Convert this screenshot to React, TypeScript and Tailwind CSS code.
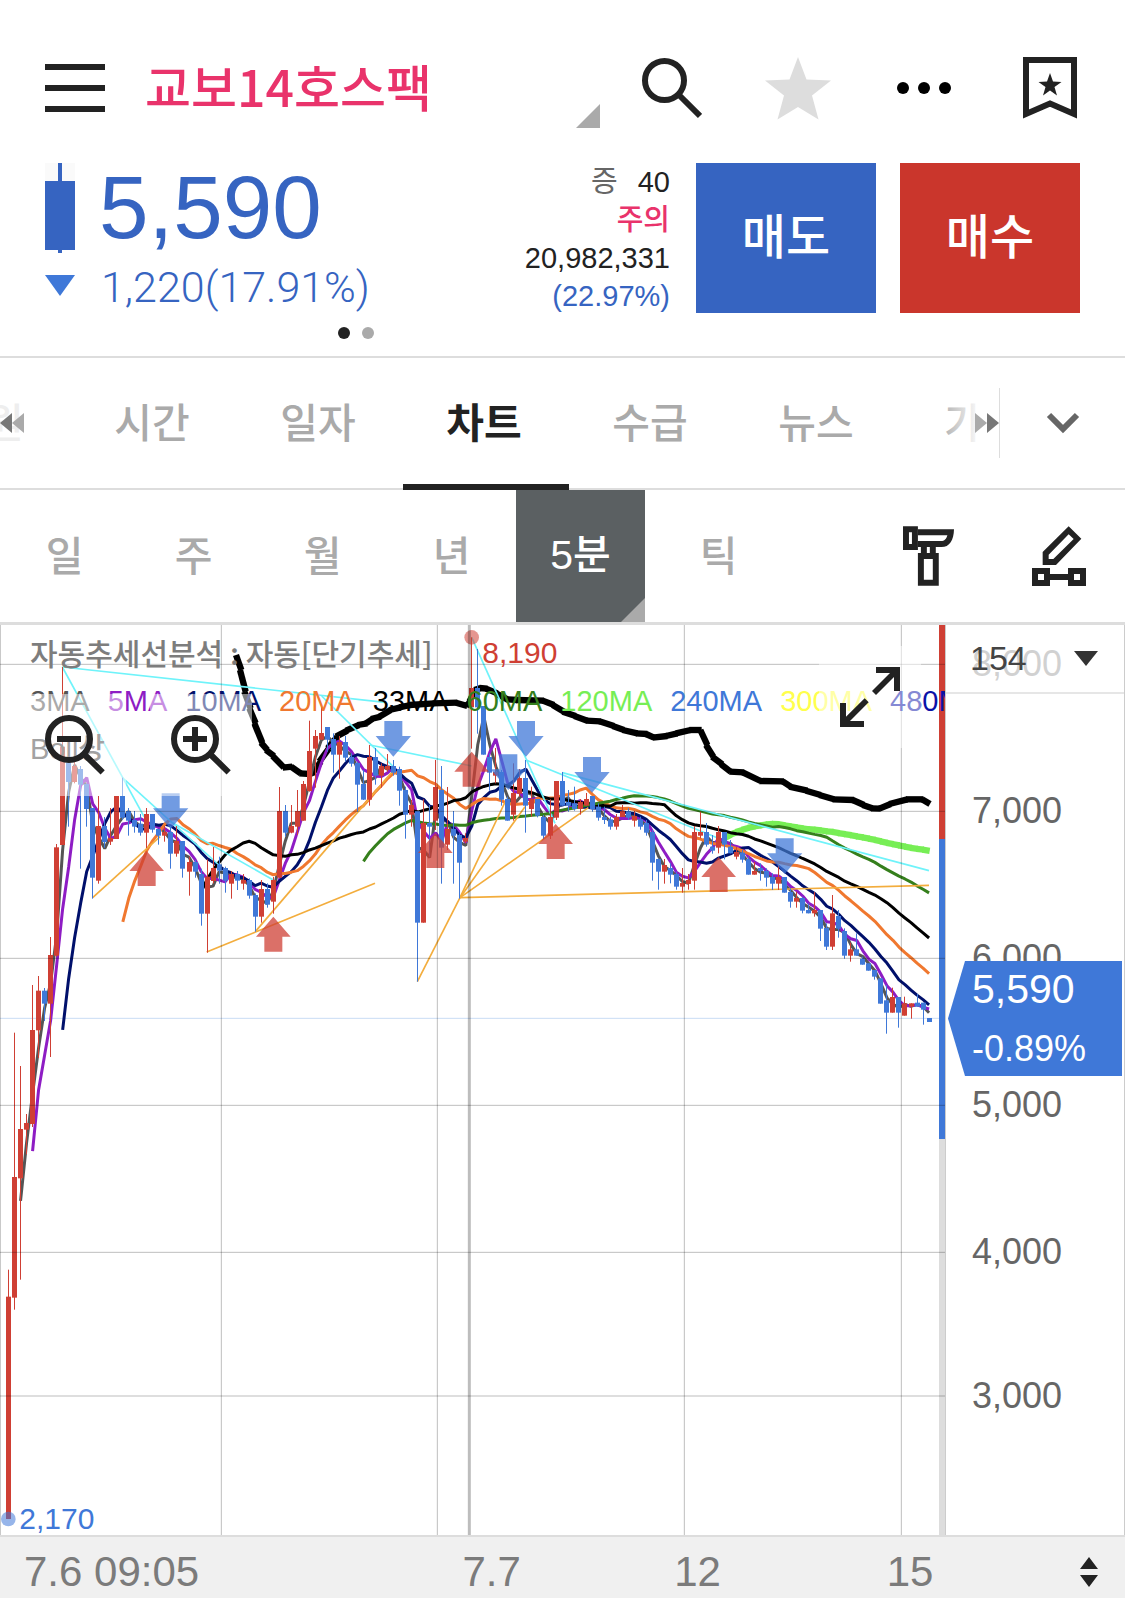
import React from "react";

type Candle = [color: "r" | "b", high: number, top: number, bottom: number, low: number];

/* Chart units: three per pixel, y grows downwards. */
const CHART = { width: 2835, top: 15, height: 2730 };
const STEP = 18.05;
const FIRST_X = 25.5;

const candles: Candle[] = [
  ["r", 1949, 2030, 2697, 2697], ["r", 1238, 1671, 2033, 2069], ["r", 1338, 1527, 1675, 1979], ["r", 1482, 1509, 1529, 1603],
  ["r", 1095, 1230, 1512, 1521], ["r", 1068, 1112, 1231, 1314], ["b", 1104, 1112, 1151, 1203], ["r", 951, 1005, 1151, 1311],
  ["r", 672, 682, 1007, 1010], ["r", 141, 380, 675, 675], ["b", 380, 428, 486, 620], ["r", 410, 438, 486, 490],
  ["b", 438, 447, 494, 746], ["b", 490, 492, 567, 620], ["b", 564, 564, 773, 836], ["r", 528, 618, 782, 791],
  ["b", 591, 618, 666, 683], ["r", 564, 654, 665, 675], ["r", 528, 528, 657, 657], ["b", 473, 528, 593, 600],
  ["b", 564, 573, 602, 647], ["b", 573, 600, 620, 638], ["b", 582, 611, 638, 647], ["r", 564, 582, 638, 684],
  ["b", 582, 582, 629, 638], ["b", 627, 627, 647, 674], ["r", 618, 636, 647, 665], ["b", 618, 636, 701, 746],
  ["r", 618, 663, 701, 710], ["b", 663, 663, 746, 773], ["r", 710, 726, 755, 827], ["b", 720, 726, 755, 773],
  ["b", 746, 762, 881, 917], ["r", 718, 770, 881, 998], ["r", 681, 744, 783, 790], ["b", 710, 733, 752, 791],
  ["b", 740, 744, 782, 818], ["r", 753, 762, 791, 836], ["b", 753, 762, 782, 810], ["r", 762, 780, 791, 809],
  ["b", 775, 780, 827, 836], ["b", 820, 825, 890, 935], ["r", 780, 807, 890, 908], ["b", 790, 807, 854, 863],
  ["r", 771, 780, 845, 881], ["r", 501, 573, 773, 775], ["b", 555, 573, 638, 650], ["r", 555, 618, 638, 640],
  ["r", 510, 573, 620, 645], ["r", 483, 492, 602, 602], ["r", 302, 393, 513, 515], ["r", 330, 348, 386, 503],
  ["r", 257, 339, 359, 360], ["b", 321, 321, 359, 395], ["b", 340, 357, 404, 458], ["r", 348, 366, 404, 476],
  ["b", 348, 366, 413, 425], ["b", 400, 411, 431, 440], ["b", 425, 429, 494, 575], ["b", 450, 492, 539, 540],
  ["r", 375, 411, 539, 557], ["b", 384, 411, 467, 494], ["r", 430, 438, 467, 503], ["r", 402, 438, 449, 455],
  ["b", 420, 438, 458, 467], ["b", 440, 447, 512, 557], ["b", 500, 510, 584, 656], ["r", 540, 555, 584, 620],
  ["b", 573, 573, 908, 1085], ["r", 538, 609, 908, 908], ["b", 555, 609, 620, 710], ["r", 420, 501, 602, 630],
  ["b", 438, 510, 683, 791], ["r", 501, 627, 674, 690], ["b", 573, 627, 647, 791], ["b", 640, 645, 728, 836],
  ["r", 640, 654, 665, 670], ["r", 52, 204, 262, 386], ["b", 87, 204, 262, 341], ["b", 258, 258, 404, 404],
  ["b", 400, 411, 458, 512], ["r", 384, 456, 467, 490], ["b", 450, 456, 539, 557], ["b", 530, 537, 602, 602],
  ["r", 430, 519, 584, 602], ["r", 447, 474, 521, 530], ["b", 420, 474, 557, 638], ["r", 500, 537, 567, 590],
  ["b", 537, 537, 587, 592], ["b", 585, 591, 647, 657], ["r", 538, 591, 647, 657], ["r", 483, 483, 593, 600],
  ["b", 456, 483, 557, 557], ["b", 510, 546, 557, 575], ["b", 500, 550, 567, 572], ["r", 537, 546, 567, 584],
  ["r", 519, 537, 557, 557], ["b", 528, 528, 567, 575], ["b", 550, 560, 593, 602], ["b", 560, 591, 600, 612],
  ["b", 590, 598, 620, 629], ["r", 582, 591, 620, 629], ["r", 555, 573, 591, 591], ["b", 565, 573, 593, 600],
  ["r", 573, 588, 602, 620], ["b", 590, 598, 620, 629], ["b", 600, 609, 638, 647], ["b", 630, 636, 728, 782],
  ["b", 715, 717, 755, 809], ["r", 717, 735, 755, 791], ["b", 730, 744, 764, 790], ["b", 755, 762, 800, 809],
  ["r", 744, 789, 800, 818], ["r", 762, 780, 792, 809], ["r", 618, 636, 782, 809], ["r", 575, 636, 647, 655],
  ["b", 609, 636, 674, 680], ["b", 645, 680, 692, 701], ["r", 618, 636, 683, 700], ["b", 636, 636, 674, 718],
  ["b", 660, 680, 700, 700], ["r", 681, 696, 710, 718], ["b", 690, 698, 719, 728], ["b", 710, 717, 764, 764],
  ["r", 726, 753, 764, 764], ["b", 730, 744, 753, 782], ["b", 745, 753, 773, 800], ["b", 760, 771, 791, 810],
  ["r", 735, 771, 791, 810], ["b", 771, 771, 818, 818], ["b", 805, 816, 845, 863], ["r", 815, 834, 845, 863],
  ["b", 830, 834, 872, 880], ["b", 850, 870, 880, 880], ["r", 816, 870, 880, 890], ["b", 870, 870, 926, 963],
  ["b", 910, 924, 980, 990], ["r", 825, 880, 980, 990], ["b", 870, 888, 926, 953], ["b", 925, 933, 1007, 1016],
  ["r", 968, 988, 1007, 1025], ["b", 940, 988, 1007, 1007], ["b", 1010, 1016, 1034, 1034], ["b", 1030, 1030, 1052, 1052],
  ["b", 1050, 1050, 1070, 1079], ["b", 1075, 1075, 1151, 1151], ["b", 1095, 1141, 1178, 1241], ["r", 1103, 1131, 1178, 1178],
  ["b", 1131, 1131, 1178, 1223], ["r", 1130, 1150, 1187, 1187], ["r", 1150, 1150, 1160, 1196], ["b", 1122, 1148, 1160, 1160],
  ["b", 1148, 1148, 1169, 1214], ["b", 1194, 1194, 1206, 1206],
];

const closes = candles.map(([c, , top, bottom]) => (c === "r" ? top : bottom));
const xAt = (i: number) => FIRST_X + i * STEP;

function average(period: number): [number, number][] {
  const out: [number, number][] = [];
  for (let i = period - 1; i < closes.length; i++) {
    let sum = 0;
    for (let k = i - period + 1; k <= i; k++) sum += closes[k];
    out.push([xAt(i), sum / period]);
  }
  return out;
}

const bollUpper: [number, number][] = [
  [710, 105], [722, 150], [735, 215], [750, 265], [765, 310], [785, 368], [800, 390], [820, 408], [850, 443], [875, 440],
  [900, 460], [930, 462], [945, 455], [960, 425], [985, 385], [1010, 350], [1040, 332], [1075, 315], [1100, 310], [1115, 297],
  [1140, 290], [1170, 270], [1200, 262], [1230, 255], [1300, 250], [1370, 248], [1400, 258], [1410, 245], [1425, 210],
  [1440, 204], [1460, 206], [1490, 220], [1520, 238], [1550, 240], [1630, 242], [1660, 255], [1690, 275], [1725, 288],
  [1760, 302], [1800, 304], [1840, 318], [1870, 330], [1910, 340], [1940, 342], [1960, 353], [2000, 348], [2030, 340],
  [2070, 330], [2103, 330], [2120, 375], [2138, 410], [2165, 433], [2190, 455], [2230, 457], [2280, 483], [2350, 484],
  [2370, 500], [2420, 512], [2460, 525], [2500, 538], [2560, 540], [2590, 555], [2615, 565], [2640, 566], [2670, 552],
  [2720, 538], [2768, 538], [2788, 552],
];

const averages = [
  { period: 3, color: "#555555" },
  { period: 5, color: "#8e1cc4" },
  { period: 10, color: "#00106b" },
  { period: 20, color: "#f0782f" },
  { period: 33, color: "#000000" },
  { period: 60, color: "#357f1c" },
];

const resistance = [
  [187, 141, 1155, 247], [187, 141, 432, 590], [367, 473, 660, 738], [512, 605, 820, 780], [965, 228, 1180, 440],
  [1110, 375, 1415, 438], [1415, 52, 1665, 610], [1578, 420, 2155, 655], [1687, 458, 2787, 752],
];
const support = [
  [278, 833, 480, 650], [620, 996, 1125, 790], [766, 935, 1180, 452], [1252, 1085, 1380, 833], [1380, 833, 1518, 540],
  [1380, 833, 1575, 560], [1380, 833, 1765, 563], [1380, 833, 2787, 796],
];
const buyMarks = [[440, 693], [820, 890], [1415, 395], [1306, 639], [1667, 612], [2156, 711]];
const sellMarks = [[512, 520], [1180, 303], [1578, 303], [1525, 403], [1776, 411], [2354, 655]];

const legend = [
  { label: "3MA", tone: "text-[#555555]" },
  { label: "5MA", tone: "text-[#8e1cc4]" },
  { label: "10MA", tone: "text-[#00106b]" },
  { label: "20MA", tone: "text-[#f0782f]" },
  { label: "33MA", tone: "text-black" },
  { label: "60MA", tone: "text-[#357f1c]" },
  { label: "120MA", tone: "text-[#77ee55]" },
  { label: "240MA", tone: "text-[#3f78d8]" },
  { label: "300MA", tone: "text-[#ffff4d]" },
  { label: "480MA", tone: "text-[#0a12a8]" },
];

const priceTicks = [
  { label: "8,000", y: 133 },
  { label: "7,000", y: 574 },
  { label: "6,000", y: 1015 },
  { label: "5,000", y: 1456 },
  { label: "4,000", y: 1897 },
  { label: "3,000", y: 2328 },
];

const toPoints = (pts: [number, number][]) => pts.map(([x, y]) => `${x},${y}`).join(" ");

function ThickLine({ pts, color }: { pts: [number, number][]; color: string }) {
  return (
    <g stroke={color} strokeWidth={19}>
      {pts.slice(1).map(([x, y], i) => (
        <line key={i} x1={pts[i][0] - 2} y1={pts[i][1]} x2={x + 2} y2={y} />
      ))}
    </g>
  );
}

function Chart() {
  return (
    <svg viewBox={`0 ${CHART.top} ${CHART.width} ${CHART.height}`} className="block w-full" role="img" aria-label="5분 차트">
      <line x1="0" x2="2817" y1="1195" y2="1195" stroke="#c9dcf5" strokeWidth="3" />
      <ThickLine pts={bollUpper} color="#000" />
      <ThickLine pts={average(120)} color="#77ee55" />
      <g fill="none" strokeWidth="9" strokeLinejoin="bevel">
        {averages.map((a) => (
          <polyline key={a.period} points={toPoints(average(a.period))} stroke={a.color} />
        ))}
      </g>
      <g stroke="#6ff3fa" strokeWidth="5">
        {resistance.map(([x1, y1, x2, y2], i) => (
          <line key={i} x1={x1} y1={y1} x2={x2} y2={y2} />
        ))}
      </g>
      <g stroke="#f3ad3d" strokeWidth="5">
        {support.map(([x1, y1, x2, y2], i) => (
          <line key={i} x1={x1} y1={y1} x2={x2} y2={y2} />
        ))}
      </g>
      {candles.map(([c, high, top, bottom, low], i) => {
        const x = 24 + Math.round((i * STEP) / 3) * 3;
        return (
          <g key={i} fill={c === "r" ? "#cf3f34" : "#3f78d8"}>
            <rect x={x} y={high} width="3" height={low - high} />
            <rect x={x - 6} y={top} width="15" height={bottom - top} />
          </g>
        );
      })}
      <g fill="#cf3f34" opacity="0.74">
        {buyMarks.map(([x, y]) => (
          <path key={x} d={`M${x} ${y}l52 60h-25v45h-54v-45h-25z`} />
        ))}
      </g>
      <g fill="#3f78d8" opacity="0.74">
        {sellMarks.map(([x, y]) => (
          <path key={x} d={`M${x - 27} ${y}h54v45h26l-53 62l-53 -62h26z`} />
        ))}
      </g>
      <circle cx="1415" cy="52" r="22" fill="#cf3f34" opacity="0.55" />
      <circle cx="25" cy="2697" r="22" fill="#3f78d8" opacity="0.55" />
      <rect x="2817" y="15" width="18" height="642" fill="#cf3f34" />
      <rect x="2817" y="657" width="18" height="900" fill="#3f78d8" />
      <rect x="2817" y="1557" width="18" height="1188" fill="#dddddd" />
      <g stroke="#000" strokeOpacity="0.26" strokeWidth="3">
        {priceTicks.map((t) => (
          <line key={t.label} x1="0" x2="2835" y1={t.y} y2={t.y} />
        ))}
        {[664, 1312, 2053, 2704].map((x) => (
          <line key={x} x1={x} x2={x} y1="15" y2="2745" />
        ))}
        <line x1="1408" x2="1408" y1="15" y2="2745" strokeWidth="9" />
        <line x1="1" x2="1" y1="15" y2="2745" />
      </g>
      <g fontFamily="Liberation Sans, sans-serif" fontSize="90">
        <text x="1447" y="129" fill="#cf3f34">8,190</text>
        <text x="58" y="2728" fill="#3f78d8">2,170</text>
      </g>
    </svg>
  );
}

function ZoomIcon({ plus }: { plus?: boolean }) {
  return (
    <svg viewBox="72 222 306 306" className="size-full" stroke="#222" strokeWidth="18" fill="none" aria-hidden="true">
      <circle cx="207" cy="357" r="63" />
      <path d="M252 402L308 457M171 357H243" />
      {plus && <path d="M207 321V393" />}
    </svg>
  );
}

const tabs = ["회원", "시간", "일자", "차트", "수급", "뉴스", "가격"];
const periods = [
  { label: "일", style: "w-[129px] pt-1 text-[#aaa]" },
  { label: "주", style: "w-[129px] pt-1 text-[#aaa]" },
  { label: "월", style: "w-[129px] pt-1 text-[#aaa]" },
  { label: "년", style: "w-[129px] pt-1 text-[#aaa]" },
  { label: "5분", style: "relative w-[129px] bg-[#5b6062] text-white" },
  { label: "틱", style: "w-[147px] pt-1 text-[#aaa]" },
];

export default function App() {
  return (
    <main className="min-h-screen bg-white font-['Liberation_Sans','Noto_Sans_CJK_KR',sans-serif] text-[#222]">
      <header className="flex h-[163px] items-start pl-[45px] pr-12 pt-[56px]">
        <button aria-label="메뉴" className="mt-2 flex w-[60px] shrink-0 flex-col gap-[15px]">
          <span className="h-[6px] w-full bg-[#222]" />
          <span className="h-[6px] w-full bg-[#222]" />
          <span className="h-[6px] w-full bg-[#222]" />
        </button>
        <button className="ml-10 flex h-[72px] flex-1 items-end justify-between text-[#e9336b]">
          <span className="h-[72px] font-['Noto_Sans_CJK_KR',sans-serif] text-[50px] font-medium leading-[58px]">교보14호스팩</span>
          <svg viewBox="0 0 24 24" className="size-6" aria-hidden="true">
            <path d="M24 0V24H0Z" fill="#aaa" />
          </svg>
        </button>
        <div className="ml-[42px] flex shrink-0 items-start">
          <button aria-label="검색">
            <svg viewBox="0 0 60 64" className="block h-16 w-[60px]" fill="none" stroke="#222" strokeWidth="6" aria-hidden="true">
              <circle cx="22.5" cy="24.5" r="19.5" />
              <path d="M36 38L58 60" />
            </svg>
          </button>
          <button aria-label="관심종목" className="ml-[63px]">
            <svg viewBox="0 0 66 64" className="block h-16 w-[66px]" fill="#ddd" aria-hidden="true">
              <path d="M33 1L41.5 23.5L66 24.5L47 39.5L53.5 63.5L33 51L12.5 63.5L19 39.5L0 24.5L24.500 23.500Z" />
            </svg>
          </button>
          <button aria-label="더보기" className="ml-[66px]">
            <svg viewBox="0 0 54 64" className="block h-16 w-[54px]" fill="#000" aria-hidden="true">
              <circle cx="6" cy="32" r="6" />
              <circle cx="27" cy="32" r="6" />
              <circle cx="48" cy="32" r="6" />
            </svg>
          </button>
          <button aria-label="관심그룹" className="ml-[72px]">
            <svg viewBox="0 0 54 64" className="block h-16 w-[54px]" aria-hidden="true">
              <path d="M3 4H51V58L27 47.500L3 58Z" fill="none" stroke="#222" strokeWidth="6" />
              <path d="M27 17L30 25.5L38.5 26L31.5 31L34 39.5L27 34.5L20 39.5L22.5 31L15.5 26L24 25.5Z" fill="#222" />
            </svg>
          </button>
        </div>
      </header>

      <section className="flex h-[193px] items-start pl-[45px] pr-[45px]">
        <svg viewBox="0 0 30 134" className="h-[134px] w-[30px] shrink-0" aria-hidden="true">
          <path d="M0 0H30V18H0Z" fill="#fafafa" />
          <path d="M13 0H17V90H13ZM0 18H30V87H0Z" fill="#3664c1" />
          <path d="M0 112H30L15 133Z" fill="#3f78d8" />
        </svg>
        <div className="ml-6 text-[#3664c1]">
          <p className="text-[89px] leading-[88px]">5,590</p>
          <p className="pl-0.5 font-['Roboto',sans-serif] text-[43px] font-light leading-[72px]">1,220(17.91%)</p>
          <div className="mt-1 flex w-full justify-end gap-3">
            <span className="size-3 rounded-full bg-[#222]" />
            <span className="-mr-1 size-3 rounded-full bg-[#aaa]" />
          </div>
        </div>
        <div className="flex flex-1 flex-col pr-[26px] text-right text-[29px] leading-[38px]">
          <p>
            <span className="mr-5 text-[#666]">증</span>40
          </p>
          <p className="font-medium text-[#e9336b]">주의</p>
          <p>20,982,331</p>
          <p className="text-[#3664c1]">(22.97%)</p>
        </div>
        <div className="flex shrink-0 gap-6 text-[48px] font-medium text-white">
          <button className="h-[150px] w-[180px] bg-[#3664c1]">매도</button>
          <button className="h-[150px] w-[180px] bg-[#ca362c]">매수</button>
        </div>
      </section>

      <nav className="flex h-[134px] items-stretch border-y-2 border-[#ddd]">
        <div className="relative min-w-0 flex-1">
          <div className="h-full overflow-hidden">
            <div className="-ml-[97px] flex h-full">
              {tabs.map((t) => (
                <button
                  key={t}
                  className={
                    t === "차트"
                      ? "w-[166px] shrink-0 pt-1 text-[41px] font-bold text-[#222]"
                      : "w-[166px] shrink-0 pt-1 text-[41px] font-medium text-[#aaa]"
                  }
                >
                  {t}
                </button>
              ))}
            </div>
          </div>
          <span className="absolute -bottom-[2px] left-[403px] h-[6px] w-[166px] bg-[#222]" />
          <span className="absolute left-0 top-0 flex h-full w-7 items-center bg-white/80">
            <svg viewBox="0 0 24 20" className="h-5 w-6" aria-hidden="true">
              <path d="M12 0V20L0 10Z" fill="#777" />
              <path d="M24 0V20L12 10Z" fill="#aaa" />
            </svg>
          </span>
          <span className="absolute right-0 top-0 flex h-full w-[60px] items-center justify-end bg-linear-to-r from-white/0 to-white to-70%">
            <svg viewBox="0 0 24 20" className="h-5 w-6" aria-hidden="true">
              <path d="M0 0V20L12 10Z" fill="#aaa" />
              <path d="M12 0V20L24 10Z" fill="#777" />
            </svg>
          </span>
        </div>
        <button aria-label="더 많은 탭" className="my-[30px] flex w-[126px] shrink-0 items-center justify-center border-l border-[#ddd]">
          <svg viewBox="0 0 34 22" className="h-[22px] w-[34px]" fill="none" stroke="#666" strokeWidth="6" aria-hidden="true">
            <path d="M3 3L17 17L31 3" />
          </svg>
        </button>
      </nav>

      <div className="flex h-[135px] items-stretch border-b-3 border-[#ddd] text-[41px] font-medium">
        {periods.map((p) => (
          <button key={p.label} className={p.style}>
            {p.label}
            {p.label === "5분" && (
              <svg viewBox="0 0 24 24" className="absolute bottom-0 right-0 size-6" aria-hidden="true">
                <path d="M24 0V24H0Z" fill="#aaa" />
              </svg>
            )}
          </button>
        ))}
        <div className="flex flex-1 items-center justify-end gap-[78px] pr-[39px]">
          <button aria-label="차트 설정">
            <svg viewBox="249 198 154 180" className="block h-[60px] w-[51px]" fill="#222" fillRule="evenodd" aria-hidden="true">
              <path d="M249 198H294V270H249ZM267 216V252H276V216Z" />
              <path d="M294 207H403C402 240 390 261 365 261H294ZM294 225V243H364C374 243 380 236 383 225Z" />
              <path d="M303 261H321V279H303ZM330 261H348V279H330Z" />
              <path d="M294 279H357V378H294ZM312 297V360H339V297Z" />
            </svg>
          </button>
          <button aria-label="그리기 도구">
            <svg viewBox="636 198 162 180" className="block h-[60px] w-[54px]" fill="#222" fillRule="evenodd" aria-hidden="true">
              <path d="M746 199L784 236L708 315H668V276ZM746 223L686 284V297H700L761 237Z" />
              <path d="M636 324H690V342H744V324H798V378H744V360H690V378H636ZM654 342V360H672V342ZM762 342V360H780V342Z" />
            </svg>
          </button>
        </div>
      </div>

      <section className="flex items-stretch">
        <div className="relative flex-1 overflow-hidden">
          <Chart />
          <div className="absolute left-[30px] top-1 whitespace-nowrap text-[29px] leading-[48px]">
            <p className="font-['Noto_Sans_CJK_KR',sans-serif] text-[30px] font-medium leading-[46px] text-[#7d7d7d]">
              자동추세선분석 : 자동[단기추세]
            </p>
            <ul className="flex gap-[18px] pt-0.5">
              {legend.map((l) => (
                <li key={l.label} className={l.tone}>
                  {l.label}
                </li>
              ))}
            </ul>
            <p className="font-medium text-[#444]">Boll상</p>
          </div>
          <div className="absolute left-6 top-[69px] flex gap-6">
            <button aria-label="축소" className="size-[102px] bg-white/50">
              <ZoomIcon />
            </button>
            <button aria-label="확대" className="size-[102px] bg-white/50">
              <ZoomIcon plus />
            </button>
          </div>
          <button aria-label="전체 화면" className="absolute right-6 top-[21px] size-[102px] bg-white/50">
            <svg viewBox="537 78 306 306" className="size-full" fill="#222" aria-hidden="true">
              <path d="M708 141H780V213H762V171L708 225L696 213L750 159H708Z" />
              <path d="M600 249H618V290L674 235L686 247L630 303H672V321H600Z" />
            </svg>
          </button>
        </div>
        <div className="relative w-[180px] shrink-0 border-x border-[#ccc] text-[36px] leading-[40px] text-[#666]">
          {priceTicks.map((t) => (
            <span
              key={t.label}
              className="absolute left-[26px] -translate-y-1/2"
              style={{ top: `${((t.y - CHART.top) / CHART.height) * 100}%` }}
            >
              {t.label}
            </span>
          ))}
          <label className="absolute inset-x-0 top-0 flex h-[69px] items-center border-b-2 border-[#e6e6e6] bg-white/70">
            <select aria-label="봉 개수" defaultValue="154" className="w-full appearance-none bg-transparent pb-0.5 pl-6 text-[34px] text-[#444]">
              <option value="154">154</option>
            </select>
            <svg viewBox="0 0 24 15" className="pointer-events-none absolute right-[26px] h-[15px] w-6" aria-hidden="true">
              <path d="M0 0H24L12 15Z" fill="#333" />
            </svg>
          </label>
          <div
            className="absolute left-[2px] right-[2px] h-[115px] bg-[#3f78d8] pl-6 text-white [clip-path:polygon(0_50%,17px_0,100%_0,100%_100%,17px_100%)]"
            style={{ top: `${((1023 - CHART.top) / CHART.height) * 100}%` }}
          >
            <p className="text-[41px] leading-[56px]">5,590</p>
            <p className="text-[36px] leading-[64px]">-0.89%</p>
          </div>
        </div>
      </section>

      <footer className="relative h-[63px] border-t-2 border-[#ddd] bg-[#f0f0f0] text-[42px] leading-[70px] text-[#7b7b7b]">
        <span className="pl-6">7.6 09:05</span>
        <span className="absolute left-[43.7%] top-0 -translate-x-1/2">7.7</span>
        <span className="absolute left-[62%] top-0 -translate-x-1/2">12</span>
        <span className="absolute left-[80.9%] top-0 -translate-x-1/2">15</span>
        <button aria-label="지표 영역 조절" className="absolute right-[27px] top-5">
          <svg viewBox="0 0 18 30" className="block h-[30px] w-[18px]" fill="#222" aria-hidden="true">
            <path d="M9 0L18 12H0ZM9 30L18 18H0Z" />
          </svg>
        </button>
      </footer>
    </main>
  );
}
